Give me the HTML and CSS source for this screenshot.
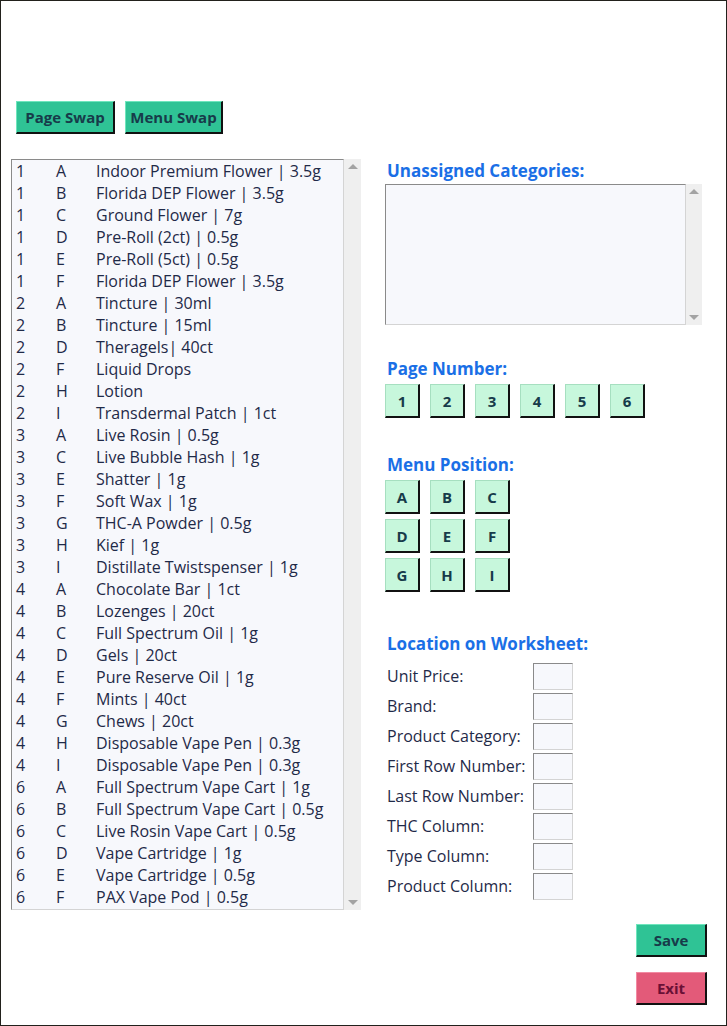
FILE: index.html
```html
<!DOCTYPE html>
<html>
<head>
<meta charset="utf-8">
<link rel="stylesheet" href="styles.css">
</head>
<body>
<div class="window">
  <div class="toolbar">
    <button class="btn btn-green swap">Page Swap</button>
    <button class="btn btn-green swap">Menu Swap</button>
  </div>
  <div class="main">
    <div class="listwrap">
      <div class="listbox">
        <div class="row"><span class="c1">1</span><span class="c2">A</span><span>Indoor Premium Flower | 3.5g</span></div>
        <div class="row"><span class="c1">1</span><span class="c2">B</span><span>Florida DEP Flower | 3.5g</span></div>
        <div class="row"><span class="c1">1</span><span class="c2">C</span><span>Ground Flower | 7g</span></div>
        <div class="row"><span class="c1">1</span><span class="c2">D</span><span>Pre-Roll (2ct) | 0.5g</span></div>
        <div class="row"><span class="c1">1</span><span class="c2">E</span><span>Pre-Roll (5ct) | 0.5g</span></div>
        <div class="row"><span class="c1">1</span><span class="c2">F</span><span>Florida DEP Flower | 3.5g</span></div>
        <div class="row"><span class="c1">2</span><span class="c2">A</span><span>Tincture | 30ml</span></div>
        <div class="row"><span class="c1">2</span><span class="c2">B</span><span>Tincture | 15ml</span></div>
        <div class="row"><span class="c1">2</span><span class="c2">D</span><span>Theragels| 40ct</span></div>
        <div class="row"><span class="c1">2</span><span class="c2">F</span><span>Liquid Drops</span></div>
        <div class="row"><span class="c1">2</span><span class="c2">H</span><span>Lotion</span></div>
        <div class="row"><span class="c1">2</span><span class="c2">I</span><span>Transdermal Patch | 1ct</span></div>
        <div class="row"><span class="c1">3</span><span class="c2">A</span><span>Live Rosin | 0.5g</span></div>
        <div class="row"><span class="c1">3</span><span class="c2">C</span><span>Live Bubble Hash | 1g</span></div>
        <div class="row"><span class="c1">3</span><span class="c2">E</span><span>Shatter | 1g</span></div>
        <div class="row"><span class="c1">3</span><span class="c2">F</span><span>Soft Wax | 1g</span></div>
        <div class="row"><span class="c1">3</span><span class="c2">G</span><span>THC-A Powder | 0.5g</span></div>
        <div class="row"><span class="c1">3</span><span class="c2">H</span><span>Kief | 1g</span></div>
        <div class="row"><span class="c1">3</span><span class="c2">I</span><span>Distillate Twistspenser | 1g</span></div>
        <div class="row"><span class="c1">4</span><span class="c2">A</span><span>Chocolate Bar | 1ct</span></div>
        <div class="row"><span class="c1">4</span><span class="c2">B</span><span>Lozenges | 20ct</span></div>
        <div class="row"><span class="c1">4</span><span class="c2">C</span><span>Full Spectrum Oil | 1g</span></div>
        <div class="row"><span class="c1">4</span><span class="c2">D</span><span>Gels | 20ct</span></div>
        <div class="row"><span class="c1">4</span><span class="c2">E</span><span>Pure Reserve Oil | 1g</span></div>
        <div class="row"><span class="c1">4</span><span class="c2">F</span><span>Mints | 40ct</span></div>
        <div class="row"><span class="c1">4</span><span class="c2">G</span><span>Chews | 20ct</span></div>
        <div class="row"><span class="c1">4</span><span class="c2">H</span><span>Disposable Vape Pen | 0.3g</span></div>
        <div class="row"><span class="c1">4</span><span class="c2">I</span><span>Disposable Vape Pen | 0.3g</span></div>
        <div class="row"><span class="c1">6</span><span class="c2">A</span><span>Full Spectrum Vape Cart | 1g</span></div>
        <div class="row"><span class="c1">6</span><span class="c2">B</span><span>Full Spectrum Vape Cart | 0.5g</span></div>
        <div class="row"><span class="c1">6</span><span class="c2">C</span><span>Live Rosin Vape Cart | 0.5g</span></div>
        <div class="row"><span class="c1">6</span><span class="c2">D</span><span>Vape Cartridge | 1g</span></div>
        <div class="row"><span class="c1">6</span><span class="c2">E</span><span>Vape Cartridge | 0.5g</span></div>
        <div class="row"><span class="c1">6</span><span class="c2">F</span><span>PAX Vape Pod | 0.5g</span></div>
      </div>
      <div class="scrollbar"><span class="arrow up"></span><span class="arrow down"></span></div>
    </div>

    <div class="side">
      <div class="heading">Unassigned Categories:</div>
      <div class="areawrap">
        <div class="textarea"></div>
        <div class="scrollbar small"><span class="arrow up"></span><span class="arrow down"></span></div>
      </div>

      <div class="heading h-page">Page Number:</div>
      <div class="btnrow">
        <button class="btn btn-mint">1</button>
        <button class="btn btn-mint">2</button>
        <button class="btn btn-mint">3</button>
        <button class="btn btn-mint">4</button>
        <button class="btn btn-mint">5</button>
        <button class="btn btn-mint">6</button>
      </div>

      <div class="heading h-menu">Menu Position:</div>
      <div class="btngrid">
        <button class="btn btn-mint">A</button>
        <button class="btn btn-mint">B</button>
        <button class="btn btn-mint">C</button>
        <button class="btn btn-mint">D</button>
        <button class="btn btn-mint">E</button>
        <button class="btn btn-mint">F</button>
        <button class="btn btn-mint">G</button>
        <button class="btn btn-mint">H</button>
        <button class="btn btn-mint">I</button>
      </div>

      <div class="heading h-loc">Location on Worksheet:</div>
      <div class="fields">
        <div class="field"><span class="label">Unit Price:</span><span class="input"></span></div>
        <div class="field"><span class="label">Brand:</span><span class="input"></span></div>
        <div class="field"><span class="label">Product Category:</span><span class="input"></span></div>
        <div class="field"><span class="label">First Row Number:</span><span class="input"></span></div>
        <div class="field"><span class="label">Last Row Number:</span><span class="input"></span></div>
        <div class="field"><span class="label">THC Column:</span><span class="input"></span></div>
        <div class="field"><span class="label">Type Column:</span><span class="input"></span></div>
        <div class="field"><span class="label">Product Column:</span><span class="input"></span></div>
      </div>
    </div>
  </div>
  <div class="footer">
    <button class="btn btn-green act">Save</button>
    <button class="btn btn-red act">Exit</button>
  </div>
</div>
</body>
</html>
```

FILE: styles.css
```css
* { box-sizing: border-box; }
html, body { margin: 0; padding: 0; background: #ffffff; }
body { font-family: "Open Sans", "Noto Sans", sans-serif; color: #1f2a48; }

.window {
  width: 727px;
  height: 1026px;
  border: 1px solid #22211c;
  padding: 100px 0 0 10px;
}

.btn {
  font-family: "Open Sans", "Noto Sans", sans-serif;
  font-weight: 700;
  font-size: 15px;
  padding: 0;
  margin: 0;
  cursor: pointer;
  border-style: solid;
  border-width: 1px 2px 2px 1px;
}
.btn-green {
  background: #2fc395;
  color: #173b4a;
  border-color: #6fe6bd #111 #111 #6fe6bd;
}
.btn-red {
  background: #e35a79;
  color: #6a1036;
  border-color: #f28aa2 #111 #111 #f28aa2;
}
.btn-mint {
  background: #c7f7dc;
  color: #173b4a;
  border-color: #a6dfc0 #111 #111 #a6dfc0;
  width: 35px;
  height: 34px;
  font-size: 15px;
}

.toolbar {
  display: flex;
  gap: 10px;
  padding-left: 5px;
}
.swap { height: 33px; width: 99px; }
.swap + .swap { width: 98px; }

.main {
  display: flex;
  margin-top: 25px;
}

.listwrap {
  display: flex;
  height: 751px;
}
.listbox {
  width: 333px;
  height: 751px;
  border: 1px solid;
  border-color: #8a8a8a #d4d4d4 #d4d4d4 #8a8a8a;
  background: #f7f8fc;
  padding: 0 0 0 4px;
  overflow: hidden;
}
.row {
  display: flex;
  height: 22px;
  line-height: 22px;
  font-size: 16px;
  white-space: nowrap;
}
.c1 { width: 40px; }
.c2 { width: 40px; }

.scrollbar {
  width: 17px;
  background: #efefef;
  position: relative;
}
.scrollbar.small { width: 16px; }
.arrow {
  position: absolute;
  left: 50%;
  margin-left: -5px;
  width: 0; height: 0;
  border-left: 5px solid transparent;
  border-right: 5px solid transparent;
}
.arrow.up { top: 5px; border-bottom: 5px solid #a3a3a3; }
.arrow.down { bottom: 5px; border-top: 5px solid #a3a3a3; }

.side {
  margin-left: 24px;
  padding-top: 1px;
}
.heading {
  color: #1a6fe6;
  font-weight: 700;
  font-size: 17px;
  line-height: 22px;
  padding-left: 2px;
}
.areawrap {
  display: flex;
  margin-top: 2px;
  height: 141px;
}
.textarea {
  width: 301px;
  height: 141px;
  border: 1px solid;
  border-color: #8a8a8a #d4d4d4 #d4d4d4 #8a8a8a;
  background: #f7f8fc;
}
.h-page { margin-top: 33px; }
.btnrow {
  display: flex;
  gap: 10px;
  margin-top: 4px;
}
.h-menu { margin-top: 36px; }
.btngrid {
  display: grid;
  grid-template-columns: repeat(3, 35px);
  column-gap: 10px;
  row-gap: 5px;
  margin-top: 4px;
}
.h-loc { margin-top: 41px; }
.fields { margin-top: 6px; }
.field {
  display: flex;
  align-items: center;
  height: 30px;
  font-size: 16px;
  padding-left: 2px;
}
.label { width: 146px; }
.input {
  width: 40px;
  height: 27px;
  border: 1px solid;
  border-color: #8a8a8a #d4d4d4 #d4d4d4 #8a8a8a;
  background: #f7f8fc;
}

.footer {
  display: flex;
  flex-direction: column;
  align-items: flex-end;
  gap: 15px;
  margin-top: 14px;
  padding-right: 19px;
}
.act { width: 71px; height: 33px; font-size: 15px; }
```
